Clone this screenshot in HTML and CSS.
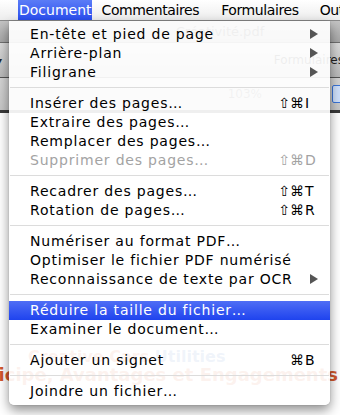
FILE: index.html
```html
<!DOCTYPE html>
<html lang="fr">
<head>
    <meta charset="UTF-8">
    <title>Menu Document</title>
    <link rel="stylesheet" href="styles.css">
</head>
<body>
    <div class="screen">
        <!-- Menu bar -->
        <div class="menubar">
            <span class="menubar-item active">Document</span>
            <span class="menubar-item item-comments">Commentaires</span>
            <span class="menubar-item item-forms">Formulaires</span>
            <span class="menubar-item item-tools">Outils</span>
        </div>

        <!-- Window behind the menu -->
        <div class="window">
            <div class="titlebar">Créativité.pdf</div>
            <div class="toolbar">
                <span class="toolbar-caret">▾</span>
                <span class="toolbar-label">Formulaires</span>
            </div>
            <div class="subbar">
                <span class="zoom-box">103%</span>
                <span class="blue-icon"></span>
            </div>
            <div class="page">
                <div class="page-title">
                    <span class="red">Creative Cars</span> <span class="blue">Utilities</span>
                </div>
                <div class="page-subtitle">Participe, Avantages et Engagements</div>
            </div>
        </div>

        <!-- Open Document menu -->
        <div class="menu">
            <div class="menu-item">En-tête et pied de page<span class="submenu-arrow"></span></div>
            <div class="menu-item">Arrière-plan<span class="submenu-arrow"></span></div>
            <div class="menu-item">Filigrane<span class="submenu-arrow"></span></div>
            <div class="menu-separator"></div>
            <div class="menu-item">Insérer des pages…<span class="shortcut"><span class="mods">⇧⌘</span><span class="key">I</span></span></div>
            <div class="menu-item">Extraire des pages…</div>
            <div class="menu-item">Remplacer des pages…</div>
            <div class="menu-item disabled">Supprimer des pages…<span class="shortcut"><span class="mods">⇧⌘</span><span class="key">D</span></span></div>
            <div class="menu-separator"></div>
            <div class="menu-item">Recadrer des pages…<span class="shortcut"><span class="mods">⇧⌘</span><span class="key">T</span></span></div>
            <div class="menu-item">Rotation de pages…<span class="shortcut"><span class="mods">⇧⌘</span><span class="key">R</span></span></div>
            <div class="menu-separator"></div>
            <div class="menu-item">Numériser au format PDF…</div>
            <div class="menu-item">Optimiser le fichier PDF numérisé</div>
            <div class="menu-item">Reconnaissance de texte par OCR<span class="submenu-arrow"></span></div>
            <div class="menu-separator"></div>
            <div class="menu-item selected">Réduire la taille du fichier…</div>
            <div class="menu-item">Examiner le document…</div>
            <div class="menu-separator"></div>
            <div class="menu-item">Ajouter un signet<span class="shortcut"><span class="mods">⌘</span><span class="key">B</span></span></div>
            <div class="menu-separator"></div>
            <div class="menu-item">Joindre un fichier…</div>
        </div>
    </div>
</body>
</html>
```

FILE: styles.css
```css
body {
    margin: 0;
    font-family: "DejaVu Sans", "Liberation Sans", sans-serif;
    background: #fff;
}

.screen {
    position: relative;
    width: 340px;
    height: 415px;
    overflow: hidden;
}

/* Menu bar */
.menubar {
    height: 21px;
    display: flex;
    align-items: stretch;
    background: linear-gradient(#ffffff, #ededed);
    border-bottom: 1px solid #8a8a8a;
    box-sizing: border-box;
    font-size: 14px;
    letter-spacing: -0.4px;
    color: #000;
    white-space: nowrap;
}

.menubar-item {
    display: flex;
    align-items: center;
}

.menubar-item.active {
    margin-left: 18px;
    width: 79px;
    padding-left: 1px;
    box-sizing: border-box;
    color: #fff;
    letter-spacing: 0;
    background: linear-gradient(#5b7cf6, #2a4ef0);
}

.item-comments { margin-left: 10px; }
.item-forms { margin-left: 22px; }
.item-tools { margin-left: 21px; }

/* Window */
.window {
    display: flex;
    flex-direction: column;
}

.titlebar {
    height: 21px;
    background: linear-gradient(#c4c4c4, #a6a6a6);
    border-bottom: 1px solid #6f6f6f;
    font-size: 13px;
    color: #333;
    text-align: center;
    line-height: 21px;
    padding-left: 100px;
}

.toolbar {
    height: 34px;
    background: linear-gradient(#dadada, #b8b8b8);
    border-bottom: 1px solid #555;
    display: flex;
    align-items: center;
    justify-content: space-between;
    font-size: 12px;
    color: #222;
}

.toolbar-caret {
    font-size: 10px;
    margin-left: -3px;
}

.toolbar-label {
    margin-right: -4px;
}

.subbar {
    height: 32px;
    background: linear-gradient(#d4d4d4, #c6c6c6);
    border-bottom: 3px solid #3a3a3a;
    display: flex;
    align-items: center;
    justify-content: flex-end;
    gap: 70px;
    font-size: 12px;
}

.zoom-box {
    color: #555;
}

.blue-icon {
    width: 16px;
    height: 16px;
    border: 1px solid #3a74d8;
    border-radius: 2px;
    margin-right: -10px;
    background: #cfe0fb;
}

.page {
    padding-top: 235px;
    font-weight: bold;
    text-align: center;
}

.page-title {
    font-size: 16px;
    line-height: 18px;
    text-align: left;
    padding-left: 28px;
}

.page-subtitle {
    color: #d2572d;
    font-size: 18px;
    white-space: nowrap;
    display: flex;
    justify-content: flex-end;
    line-height: 18px;
    margin-left: -200px;
    margin-right: 2px;
}

.red { color: #d2572d; }
.blue { color: #3d6fc0; }

/* Dropdown menu */
.menu {
    position: absolute;
    left: 9px;
    top: 21px;
    width: 321px;
    padding: 4px 0;
    background: rgba(255, 255, 255, 0.92);
    border-radius: 0 0 5px 5px;
    box-shadow: 0 5px 12px rgba(0, 0, 0, 0.45), 0 0 1px rgba(0, 0, 0, 0.4);
    font-size: 14px;
    letter-spacing: 0.8px;
    color: #000;
}

.menu-item {
    position: relative;
    height: 19px;
    line-height: 19px;
    padding-left: 21px;
    white-space: nowrap;
}

.menu-item.disabled {
    color: #a3a3a3;
}

.menu-item.selected {
    color: #fff;
    background: linear-gradient(#4f6ef5, #1f43ee);
}

.menu-separator {
    height: 1px;
    margin: 5px 1px 6px;
    background: #dcdcdc;
}

.submenu-arrow {
    position: absolute;
    right: 12px;
    top: 4px;
    width: 0;
    height: 0;
    border-top: 5px solid transparent;
    border-bottom: 5px solid transparent;
    border-left: 8px solid #555;
}

.shortcut {
    position: absolute;
    right: 0;
    top: 0;
    display: flex;
    letter-spacing: 0;
}

.shortcut .mods {
    width: 39px;
    text-align: right;
}

.shortcut .key {
    width: 25px;
    padding-left: 1px;
}
```
